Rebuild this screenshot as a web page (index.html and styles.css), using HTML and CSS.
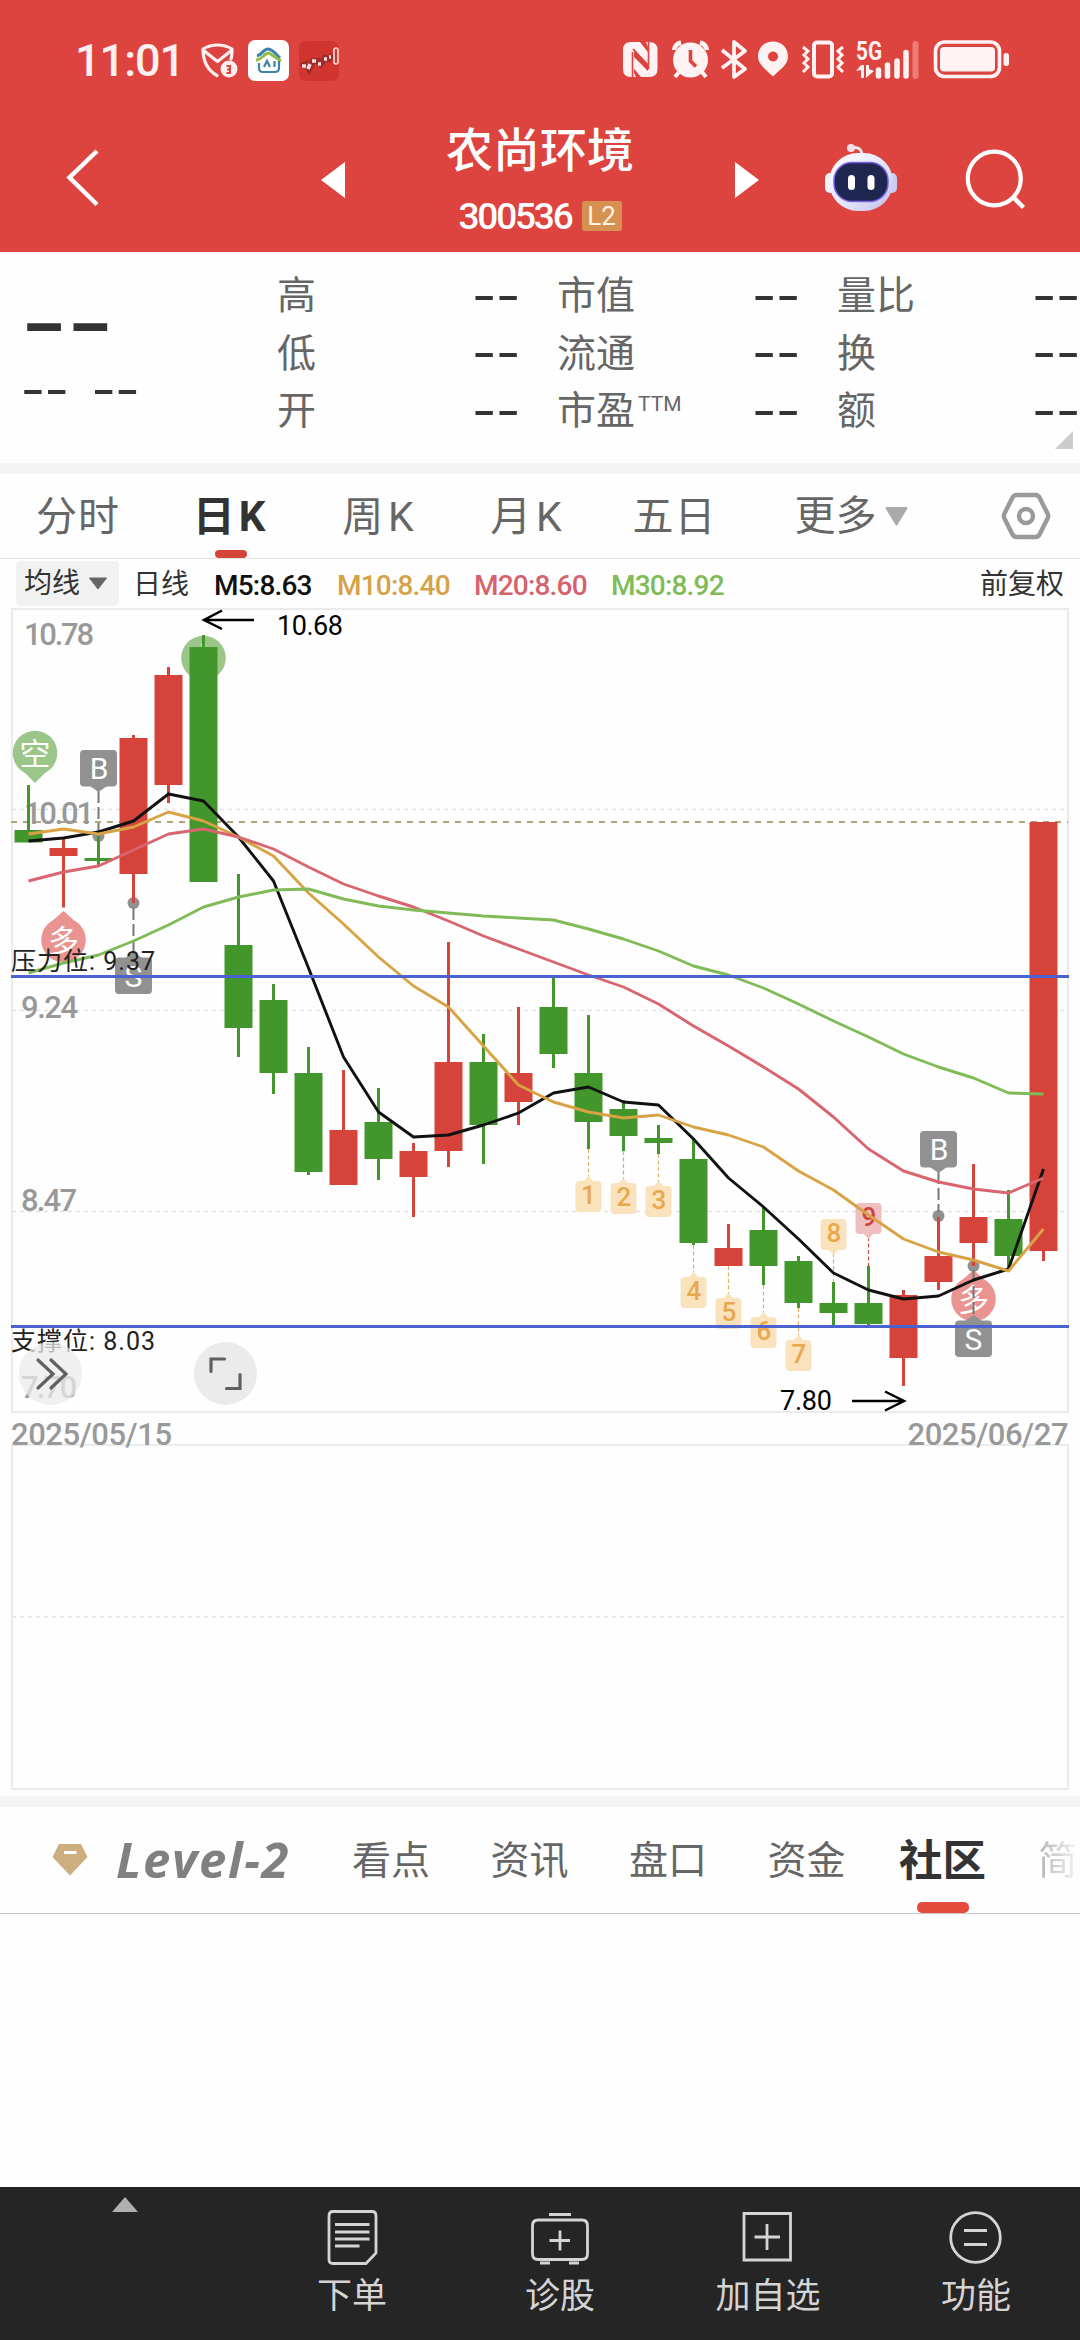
FILE: index.html
```html
<!DOCTYPE html>
<html lang="zh-CN">
<head>
<meta charset="utf-8">
<title>农尚环境 300536</title>
<link rel="stylesheet" href="styles.css">
</head>
<body>
<header class="header">
  <div class="status">
    <span class="time">11:01</span>
    <svg class="status-left" width="140" height="44" viewBox="200 39 140 44">
      <path d="M217.500 45C212 45 207 46.500 203 49C203 60 207 70 217 75.500M217.500 45C223 45 228 46.500 232 49C232 53 232 56 231 59M203 50L217.500 61.500L232 50" fill="none" stroke="#fff0f0" stroke-width="3.200" stroke-linejoin="round" stroke-linecap="round"/>
      <circle cx="229" cy="69" r="8.500" fill="#fff0f0"/>
      <path d="M226.500 66h3.500v7h-3.500M227 69.500h3" fill="none" stroke="#dd443f" stroke-width="2"/>
      <rect x="248" y="40" width="41" height="41" rx="7" fill="#fff"/>
      <path d="M257 56C262 55 263 49 268 49C272 49 276 54 280 58" fill="none" stroke="#3f82b0" stroke-width="3"/>
      <path d="M256 60C262 60 264 53 269 53L281 61" fill="none" stroke="#93bb4b" stroke-width="3"/>
      <path d="M259 63v5q0 4 4 4h12q4 0 4-4v-7M264 67l3-6l3 6M274.500 61v6" fill="none" stroke="#3f82b0" stroke-width="2.200"/>
      <rect x="299" y="41" width="40" height="40" rx="7" fill="#d0352f"/>
      <path d="M301 66l5-2 3 5 4-8 5 0 3 3 4-6 4 1 4-4" fill="none" stroke="#9d2b29" stroke-width="6"/>
      <path d="M302 66h4M308 69l2-5M312 61h4M318 64h3M324 59h3M329 57h2" fill="none" stroke="#f7dede" stroke-width="3.600"/>
      <rect x="334" y="48" width="4" height="16" rx="2" fill="none" stroke="#f7dede" stroke-width="1.600"/>
    </svg>
    <svg class="status-right" width="400" height="54" viewBox="620 29 400 54">
      <g fill="#fff2f2">
        <path d="M631 42H640L651 56V67L634 49V73L636 77H631Q623 77 623 69V50Q623 42 631 42Z"/>
        <path d="M646 42H649Q657.500 42 657.500 50V69Q657.500 77 649 77H641L630 64V53L648 71V47Z"/>
        <path d="M632.500 52V77M648.500 42V69" fill="none" stroke="#dd443f" stroke-width="1.600"/>
        <path d="M633 49L648 66M635 55L648 70" fill="none" stroke="#dd443f" stroke-width="1.600"/>
        <circle cx="690.500" cy="60" r="17.500"/>
        <path d="M674 50Q675 44 681 42.500M707 50Q706 44 700 42.500" fill="none" stroke="#fff2f2" stroke-width="4.500"/>
        <path d="M679 72l-4 5M702 72l4 5" stroke="#fff2f2" stroke-width="4"/>
        <path d="M690.500 50V61L696 66.500" fill="none" stroke="#dd443f" stroke-width="3.600"/>
        <path d="M722 50L745 69L734 77V42L745 51L722 68" fill="none" stroke="#fff2f2" stroke-width="3.800" stroke-linejoin="round"/>
        <path fill-rule="evenodd" d="M773 41.500C764 41.500 758 48 758 56.500C758 64 764 68 773 76.500C782 68 788 64 788 56.500C788 48 782 41.500 773 41.500ZM773 51.500a5 5 0 1 0 .1 0Z"/>
        <rect x="814" y="42.500" width="18" height="34" rx="3" fill="none" stroke="#fff2f2" stroke-width="4"/>
        <path d="M803 47l5 4-4 4 4 4-4 4 4 4-5 5M843 47l-5 4 4 4-4 4 4 4-4 4 5 5" fill="none" stroke="#fff2f2" stroke-width="3"/>
        <text x="856" y="59.500" class="five-g" textLength="26" lengthAdjust="spacingAndGlyphs">5G</text>
        <path d="M856 71l5-6h3v13h-3v-8ZM866 65h3v4l5 2-8 7Z"/>
        <path d="M878.500 70V76M887.500 65V76M897 61V76M906 52.500V76" stroke="#fff2f2" stroke-width="5.500" stroke-linecap="round"/>
        <path d="M915.500 44V76" stroke="#ef7b78" stroke-width="6" stroke-linecap="round"/>
        <rect x="935.500" y="42" width="64" height="34.500" rx="9" fill="none" stroke="#fff2f2" stroke-width="3.600"/>
        <rect x="940" y="47" width="55" height="24.500" rx="4"/>
        <rect x="1003.500" y="53" width="5.500" height="13" rx="2.700"/>
      </g>
    </svg>
  </div>
  <div class="titlebar">
    <svg class="back" width="36" height="60" viewBox="65 148 36 60"><path d="M97 151L69.500 177.500L97 204.500" fill="none" stroke="#fff" stroke-width="4.500"/></svg>
    <svg width="24" height="36" viewBox="0 0 24 36"><path d="M24 0V36L0 18Z" fill="#fff"/></svg>
    <div class="title">
      <h1>农尚环境</h1>
      <div class="code-row"><span class="code">300536</span><span class="badge">L2</span></div>
    </div>
    <svg class="next" width="24" height="36" viewBox="0 0 24 36"><path d="M0 0V36L24 18Z" fill="#fff"/></svg>
    <svg class="robot" width="72" height="68" viewBox="825 149 72 68">
      <defs><linearGradient id="shell" x1="0" y1="0" x2="1" y2="1"><stop offset="0" stop-color="#fff"/><stop offset=".6" stop-color="#dfe4fb"/><stop offset="1" stop-color="#c4b6e8"/></linearGradient></defs>
      <path d="M851 153C858 151 862 154 862 161" fill="none" stroke="#f0e3ee" stroke-width="3"/>
      <circle cx="851" cy="153" r="4" fill="#f0dfe8"/>
      <rect x="825" y="178" width="12" height="20" rx="5" fill="#edf0fd"/><rect x="885" y="178" width="12" height="20" rx="5" fill="#c7cdf3"/>
      <rect x="829" y="158" width="64" height="58" rx="29" fill="url(#shell)"/>
      <rect x="834" y="167.500" width="54" height="39" rx="18" fill="#1f2750" stroke="#7a5fe0" stroke-width="1.500"/>
      <rect x="848" y="180" width="7" height="15" rx="3.500" fill="#fff"/><rect x="867.500" y="180" width="7" height="15" rx="3.500" fill="#fff"/>
    </svg>
    <svg class="search" width="62" height="62" viewBox="965 148 62 62"><ellipse cx="994.300" cy="178.500" rx="26.500" ry="26.800" fill="none" stroke="#fff" stroke-width="4.200"/><path d="M1013 197L1023.500 207.500" stroke="#fff" stroke-width="4.500"/></svg>
  </div>
</header>

<section class="quote">
  <div class="price">
    <div class="big"><span class="dash">--</span></div>
    <div class="change"><span class="dash">--</span><span class="dash">--</span></div>
  </div>
  <dl class="stats">
    <div class="stat"><dt>高</dt><dd class="dash">--</dd></div>
    <div class="stat"><dt>市值</dt><dd class="dash">--</dd></div>
    <div class="stat"><dt>量比</dt><dd class="dash">--</dd></div>
    <div class="stat"><dt>低</dt><dd class="dash">--</dd></div>
    <div class="stat"><dt>流通</dt><dd class="dash">--</dd></div>
    <div class="stat"><dt>换</dt><dd class="dash">--</dd></div>
    <div class="stat"><dt>开</dt><dd class="dash">--</dd></div>
    <div class="stat"><dt>市盈<span class="ttm">TTM</span></dt><dd class="dash">--</dd></div>
    <div class="stat"><dt>额</dt><dd class="dash">--</dd></div>
  </dl>
  <svg class="corner" width="18" height="18" viewBox="0 0 18 18"><path d="M18 0V18H0Z" fill="#ccc"/></svg>
</section>

<nav class="periods">
  <span class="period">分时</span>
  <span class="period active">日K</span>
  <span class="period k">周K</span>
  <span class="period k">月K</span>
  <span class="period">五日</span>
  <span class="period more">更多<svg width="23" height="19" viewBox="0 0 23 19"><path d="M1.500 1H21.500L11.500 17.500Z" fill="#aaa" stroke="#aaa" stroke-width="2" stroke-linejoin="round"/></svg></span>
  <svg class="settings" width="50" height="48" viewBox="0 0 50 48"><path d="M15.500 3H34.500Q37 3 38.500 5.500L46.500 21.500Q47.800 24 46.500 26.500L38.500 42.500Q37 45 34.500 45H15.500Q13 45 11.500 42.500L3.500 26.500Q2.200 24 3.500 21.500L11.500 5.500Q13 3 15.500 3Z" fill="none" stroke="#999" stroke-width="4.400"/><circle cx="25" cy="24" r="7" fill="none" stroke="#999" stroke-width="4.400"/></svg>
</nav>

<div class="indicators">
  <span class="chip">均线<svg width="20" height="13" viewBox="0 0 20 13"><path d="M1.500 1H18.500L10 12Z" fill="#666" stroke="#666" stroke-linejoin="round"/></svg></span>
  <span class="daily">日线</span>
  <span class="ma m5">M5:8.63</span>
  <span class="ma m10">M10:8.40</span>
  <span class="ma m20">M20:8.60</span>
  <span class="ma m30">M30:8.92</span>
  <span class="adjust">前复权</span>
</div>

<svg class="chart" width="1080" height="1188" viewBox="0 608 1080 1188">
  <!-- frames and grid -->
  <g fill="none" stroke="#ebebeb" stroke-width="2">
    <path d="M12 609H1068V1412H12ZM12 1445H1068V1789H12Z"/>
    <path d="M12 809.500H1068M12 1010.500H1068M12 1211.500H1068M12 1617H1068" stroke="#e2e2e2" stroke-width="1.300" stroke-dasharray="4 4"/>
    <path d="M11 822H1068" stroke="#b3a27c" stroke-dasharray="6 6"/>
  </g>
  <g class="axis">
    <text x="24" y="645" textLength="70">10.78</text>
    <text x="24" y="824" textLength="70">10.01</text>
    <text x="21" y="1018" textLength="57">9.24</text>
    <text x="21" y="1211" textLength="56">8.47</text>
    <text x="21" y="1398" textLength="56">7.70</text>
    <text x="11" y="1445" textLength="161">2025/05/15</text>
    <text x="907.500" y="1445" textLength="161">2025/06/27</text>
  </g>

  <!-- long / short signals -->
  <g class="signal">
    <path d="M23 771L35 783L47 771Z" fill="#9ac689"/><circle cx="35" cy="753" r="22.300" fill="#9ac689"/>
    <text x="35" y="765">空</text>
    <circle cx="203.500" cy="658" r="22.300" fill="#9ac689"/>
    <text x="203.500" y="670">空</text>
    <path d="M51 922L63.500 911L76 922Z" fill="#e99490"/><circle cx="63.500" cy="940" r="22.300" fill="#e99490"/>
    <text x="63.500" y="952">多</text>
    <path d="M961 1281L973.500 1270L986 1281Z" fill="#e99490"/><circle cx="973.500" cy="1299" r="22.300" fill="#e99490"/>
    <text x="973.500" y="1311">多</text>
  </g>

  <!-- buy / sell flags -->
  <g fill="#919191">
    <circle cx="98.500" cy="836" r="6"/><circle cx="133.500" cy="903" r="6"/><circle cx="938.500" cy="1216" r="6"/><circle cx="973.500" cy="1266" r="6"/>
    <path d="M98.500 791V834M133.500 908V958M938.500 1172V1212M973.500 1270V1318" stroke="#777" stroke-width="2" stroke-dasharray="12 4"/>
    <path d="M90 786H107L98.500 792ZM125 958H142L133.500 952ZM930 1167H947L938.500 1173ZM965 1321H982L973.500 1315Z"/>
    <rect x="80" y="750" width="37" height="36.500" rx="4"/><rect x="115" y="957.500" width="37" height="36.500" rx="4"/>
    <rect x="920" y="1131" width="37" height="36.500" rx="4"/><rect x="955" y="1320.500" width="37" height="36.500" rx="4"/>
  </g>
  <g class="flag">
    <text x="99" y="779">B</text><text x="133.500" y="987">S</text><text x="939" y="1160">B</text><text x="973.500" y="1350">S</text>
  </g>

  <!-- candles: wicks, then bodies -->
  <g fill="none" stroke="#43962b">
    <path stroke-width="3" d="M28.500 785V842M98.500 836V865M203.500 635V882M238.500 874V1057M273.500 984V1094M308.500 1047V1175M378.500 1088V1180M483.500 1034V1164M553.500 978V1068M588.500 1015V1149M623.500 1100V1151M658.500 1125V1154M693.500 1140V1245M763.500 1207V1285M798.500 1256V1308M833.500 1282V1326M868.500 1266V1326M1008.500 1190V1270"/>
    <path stroke-width="28" d="M28.500 830V842.500M98.500 858V861M203.500 647V882M238.500 945V1028M273.500 1000V1073M308.500 1073V1172M378.500 1122V1159M483.500 1062V1125M553.500 1007V1054M588.500 1073V1122M623.500 1109V1136M658.500 1138V1143M693.500 1159V1243M763.500 1230V1266M798.500 1261V1303M833.500 1303V1313M868.500 1303V1324M1008.500 1219V1256"/>
  </g>
  <g fill="none" stroke="#d6433a">
    <path stroke-width="3" d="M63.500 839V907.500M133.500 735V903M168.500 667V803M343.500 1070V1185M413.500 1143V1217M448.500 942V1167M518.500 1007V1125M728.500 1224V1266M903.500 1290V1386M938.500 1217V1290M973.500 1164V1266M1043.500 822V1261"/>
    <path stroke-width="28" d="M63.500 848V856M133.500 738V874M168.500 675V785M343.500 1130V1185M413.500 1151V1177M448.500 1062V1151M518.500 1073V1102M728.500 1248V1266M903.500 1295V1358M938.500 1256V1282M973.500 1217V1243M1043.500 822V1251"/>
  </g>

  <!-- sequence tags -->
  <g fill="none" stroke="#dcb06a" stroke-width="1.200" stroke-dasharray="4 2.500">
    <path d="M588.500 1149V1178M623.500 1151V1180M658.500 1154V1183M693.500 1245V1274M728.500 1266V1295M763.500 1285V1314M798.500 1308V1337M833.500 1253V1282"/>
    <path d="M868.500 1237V1266" stroke="#c25050"/>
  </g>
  <g fill="#fae2bd">
    <path id="up" d="M579.500 1181H584L588.500 1176L593 1181H597.500Q601.500 1181 601.500 1185V1208Q601.500 1212 597.500 1212H579.500Q575.500 1212 575.500 1208V1185Q575.500 1181 579.500 1181Z"/>
    <use href="#up" x="35" y="2"/><use href="#up" x="70" y="5"/><use href="#up" x="105" y="96"/><use href="#up" x="140" y="117"/><use href="#up" x="175" y="136"/><use href="#up" x="210" y="159"/>
    <path d="M824.500 1219H842.500Q846.500 1219 846.500 1223V1246Q846.500 1250 842.500 1250H838L833.500 1255L829 1250H824.500Q820.500 1250 820.500 1246V1223Q820.500 1219 824.500 1219Z"/>
    <path fill="#efbfbf" d="M859.500 1203H877.500Q881.500 1203 881.500 1207V1230Q881.500 1234 877.500 1234H873L868.500 1239L864 1234H859.500Q855.500 1234 855.500 1230V1207Q855.500 1203 859.500 1203Z"/>
  </g>
  <g class="tag">
    <text x="588.500" y="1204">1</text><text x="624" y="1206">2</text><text x="659" y="1209">3</text><text x="694" y="1300">4</text><text x="729" y="1321">5</text><text x="764" y="1340">6</text><text x="799" y="1363">7</text><text x="834" y="1242">8</text><text x="869" y="1226" fill="#d0413c">9</text>
  </g>

  <!-- moving averages -->
  <g fill="none" stroke-width="2.900" stroke-linejoin="round">
    <path stroke="#111" d="M28.500 841L63.500 838L98.500 832L133.500 821L168.500 794L203.500 801L238.500 837L273.500 881L308.500 968L343.500 1057L378.500 1112L413.500 1137L448.500 1135L483.500 1125L518.500 1113L553.500 1093L588.500 1087L623.500 1102L658.500 1105L693.500 1139L728.500 1178L763.500 1207L798.500 1239L833.500 1273L868.500 1290L903.500 1299L938.500 1296L973.500 1280L1008.500 1269L1043.500 1169"/>
    <path stroke="#d8a345" d="M28.500 834L63.500 829L98.500 834L133.500 827L168.500 812L203.500 821L238.500 837L273.500 856L308.500 893L343.500 924L378.500 957L413.500 986L448.500 1007L483.500 1046L518.500 1085L553.500 1102L588.500 1112L623.500 1118L658.500 1115L693.500 1127L728.500 1135L763.500 1147L798.500 1171L833.500 1190L868.500 1215L903.500 1239L938.500 1252L973.500 1260L1008.500 1271L1043.500 1229"/>
    <path stroke="#d8656f" d="M28.500 881L63.500 872L98.500 866L133.500 850L168.500 834L203.500 829L238.500 837L273.500 849L308.500 867L343.500 884L378.500 896L413.500 907L448.500 921L483.500 936L518.500 949L553.500 962L588.500 975L623.500 987L658.500 1004L693.500 1026L728.500 1046L763.500 1067L798.500 1089L833.500 1117L868.500 1149L903.500 1171L938.500 1182L973.500 1189L1008.500 1193L1043.500 1178"/>
    <path stroke="#80bb58" d="M28.500 973L63.500 963L98.500 955L133.500 941L168.500 925L203.500 907L238.500 897L273.500 890L308.500 889L343.500 899L378.500 906L413.500 910L448.500 913L483.500 916L518.500 918L553.500 920L588.500 929L623.500 939L658.500 951L693.500 966L728.500 975L763.500 988L798.500 1004L833.500 1021L868.500 1037L903.500 1054L938.500 1067L973.500 1078L1008.500 1093L1043.500 1094"/>
  </g>

  <!-- resistance and support -->
  <path d="M11 976.500H1069M11 1326.500H1069" stroke="#4a63d0" stroke-width="3"/>
  <g class="level">
    <text x="11" y="970" textLength="144">压力位: 9.37</text>
    <text x="11" y="1350" textLength="144">支撑位: 8.03</text>
  </g>
  <g class="extreme">
    <text x="277" y="635" textLength="66">10.68</text>
    <text x="780" y="1410" textLength="52">7.80</text>
  </g>
  <path d="M254 620H205M222 610.500L204 620L222 629M852 1401H903M885 1391.500L904 1401L885 1410.500" fill="none" stroke="#000" stroke-width="2.500"/>

  <!-- chart buttons -->
  <g fill="#ebebeb">
    <circle cx="50.500" cy="1373.500" r="31.500" fill-opacity=".75"/><circle cx="225.500" cy="1373.500" r="31.500"/>
  </g>
  <path d="M38 1360L53 1374L38 1388M51 1360L66 1374L51 1388M211 1371.500V1359H224.500M226.500 1388.500H240V1374.500" fill="none" stroke="#606060" stroke-width="3.200" stroke-linecap="round"/>
</svg>

<nav class="sections">
  <svg class="gem" width="36" height="32" viewBox="0 0 36 32"><path d="M7 0H29L35.500 13L18 31.500L.5 13Z" fill="#ccae7f"/><path d="M12 8.500H24.500" stroke="#fff" stroke-width="3"/></svg>
  <span class="level2">Level-2</span>
  <span>看点</span><span>资讯</span><span>盘口</span><span>资金</span>
  <span class="current">社区</span>
  <span class="fade">简</span>
</nav>

<main class="content"></main>

<footer class="toolbar">
  <svg class="expand" width="26" height="15" viewBox="0 0 26 15"><path d="M13 0L26 15H0Z" fill="#b0b0b0"/></svg>
  <div class="tool">
    <svg width="60" height="56" viewBox="322 2210 60 56"><path d="M333 2211.500H372Q376 2211.500 376 2216V2253L366 2263.500H333Q329 2263.500 329 2259.500V2216Q329 2211.500 333 2211.500ZM335 2224.500H369.500M335 2232H369.500M335 2239H369.500M335 2246H359.500"/></svg>
    <span>下单</span>
  </div>
  <div class="tool">
    <svg width="60" height="56" viewBox="530 2210 60 56"><path d="M538 2220H582Q587.500 2220 587.500 2226V2254Q587.500 2259.500 582 2259.500H538Q532.500 2259.500 532.500 2254V2226Q532.500 2220 538 2220ZM549 2214.500H571M540 2263H550M569 2263H579M560 2230.500V2250.500M549.500 2240.500H570"/></svg>
    <span>诊股</span>
  </div>
  <div class="tool">
    <svg width="60" height="56" viewBox="738 2210 60 56"><path d="M744 2213.500H790.500V2260H744ZM767 2224V2250M754.500 2237H780"/></svg>
    <span>加自选</span>
  </div>
  <div class="tool">
    <svg width="60" height="56" viewBox="946 2210 60 56"><circle cx="975.500" cy="2237.500" r="24.800"/><path d="M964 2230.500H987M964 2244.500H987"/></svg>
    <span>功能</span>
  </div>
</footer>
</body>
</html>
```
FILE: styles.css
```css
* { box-sizing: border-box; }

body {
  margin: 0;
  width: 1080px;
  height: 2340px;
  overflow: hidden;
  display: flex;
  flex-direction: column;
  background: #fefefe;
  font-family: Roboto, "Noto Sans CJK SC", sans-serif;
  color: #333;
}

svg { display: block; flex: none; }

/* Header */
.header { flex: none; height: 252px; background: #dd443f; color: #fff; }
.status { display: flex; height: 122px; padding: 39px 0 0 75px; }
.time {
  width: 125px;
  font-size: 45px;
  font-weight: 500;
  line-height: 44px;
  letter-spacing: -1px;
  color: #fff0f0;
}
.status-right { margin: -10px 0 0 280px; }
.five-g { font: 700 25px Roboto, sans-serif; }

.titlebar {
  display: grid;
  grid-template-columns: 321px 69px 300px 135px 140px 1fr;
  height: 130px;
  padding-top: 2px;
}
.titlebar > svg { margin-top: 38px; }
.titlebar > .back { margin: 24px 0 0 65px; }
.titlebar > .next { margin-left: 45px; }
.titlebar > .robot { margin-top: 20px; }
.titlebar > .search { margin-top: 24px; }
.title { display: flex; flex-direction: column; align-items: center; padding-top: 2px; }
.title h1 {
  margin: 0;
  font-size: 47px;
  font-weight: 500;
  line-height: 50px;
  white-space: nowrap;
}
.code-row { display: flex; align-items: center; gap: 10px; height: 30px; margin-top: 25px; }
.code {
  width: 113px;
  font-size: 37px;
  font-weight: 500;
  line-height: 30px;
  padding-top: 2px;
  letter-spacing: -2.200px;
}
.badge {
  width: 40px;
  height: 30px;
  border-radius: 3px;
  background: #d69150;
  font-size: 26px;
  line-height: 31px;
  text-align: center;
  color: #fff3e4;
}

/* Quote summary */
.quote {
  position: relative;
  flex: none;
  display: flex;
  height: 222px;
  border-bottom: 11px solid #f4f4f4;
}
.dash {
  display: block;
  font-family: "DejaVu Sans", sans-serif;
  font-size: 66px;
  line-height: 40px;
  height: 40px;
  color: #333;
  transform: scaleY(.75);
}
.price { flex: none; width: 277px; padding-left: 21px; }
.big { padding-top: 49px; }
.big .dash { font-size: 128px; line-height: 40px; }
.change { display: flex; gap: 23px; margin-top: 28px; }
.stats {
  display: grid;
  grid-template-columns: 280px 280px 243px;
  grid-auto-rows: 57.500px;
  margin: 0;
  padding-top: 14px;
}
.stat { display: flex; justify-content: space-between; align-items: center; width: 243px; }
.stat dt { height: 57px; padding-top: 2px; font-size: 39px; line-height: 57px; color: #666; white-space: nowrap; }
.stat dd { margin: 0; }
.ttm { font-size: 21px; line-height: 1; vertical-align: 13px; margin-left: 3px; }
.corner { position: absolute; right: 7px; bottom: 14px; }

/* Period tabs */
.periods {
  flex: none;
  display: grid;
  grid-template-columns: 156px 150px 149px 147px 145px 208px 1fr;
  align-items: center;
  height: 85px;
  border-bottom: 1px solid #e4e4e4;
}
.period {
  justify-self: center;
  height: 84px;
  font-size: 41px;
  line-height: 86px;
  color: #666;
  letter-spacing: 1px;
}
.period.active {
  display: flex;
  flex-direction: column;
  align-items: center;
  color: #333;
  font-size: 42px;
  font-weight: 700;
  letter-spacing: 4px;
}
.period.active::after {
  content: "";
  flex: none;
  width: 32px;
  height: 8px;
  margin-top: -10px;
  border-radius: 4px;
  background: #d4443b;
}
.period.k { letter-spacing: 5px; }
.period.more { display: flex; align-items: center; gap: 8px; letter-spacing: 0; }
.settings { justify-self: center; margin-left: 16px; }

/* Indicator legend */
.indicators {
  flex: none;
  display: flex;
  align-items: flex-start;
  height: 49px;
  padding: 2px 16px 0;
  font-size: 28px;
  line-height: 48px;
}
.chip {
  display: flex;
  align-items: center;
  gap: 8px;
  width: 103px;
  height: 45px;
  padding-left: 8px;
  border-radius: 5px;
  background: #f1f1f1;
}
.daily { width: 95px; padding-left: 14px; }
.ma { font-weight: 500; letter-spacing: -.8px; line-height: 49px; }
.m5 { width: 123px; color: #111; }
.m10 { width: 137px; color: #d6a247; }
.m20 { width: 137px; color: #d4636e; }
.m30 { width: 137px; color: #80bb58; }
.adjust { margin-left: auto; }

/* Chart text */
.chart { flex: none; }
.axis { font-size: 31px; font-weight: 500; fill: #999; }
.signal { font-size: 31px; fill: #fff; text-anchor: middle; }
.flag { font-size: 30px; fill: #fff; text-anchor: middle; }
.tag { font-size: 26px; font-weight: 500; fill: #e8a84e; text-anchor: middle; }
.level { font-size: 25px; fill: #222; }
.extreme { font-size: 27px; fill: #000; }

/* Section tabs */
.sections {
  flex: none;
  display: flex;
  align-items: center;
  height: 118px;
  padding-left: 52px;
  border-top: 11px solid #f4f4f4;
  border-bottom: 1px solid #c8c8c8;
  font-size: 39px;
  color: #666;
  white-space: nowrap;
}
.sections > span { flex: none; width: 138.500px; height: 106px; line-height: 109px; }
.sections > .level2 {
  width: 264px;
  padding-left: 28px;
  font: italic 700 49px/105px "Open Sans", sans-serif;
  letter-spacing: 1.700px;
  color: #808080;
}
.sections > .current {
  display: flex;
  flex-direction: column;
  width: 87px;
  margin-left: -7px;
  font-size: 43.500px;
  font-weight: 700;
  color: #333;
}
.current::after {
  content: "";
  flex: none;
  width: 52px;
  height: 11px;
  margin: -14px 0 0 18px;
  border-radius: 5px;
  background: #e44d3e;
}
.sections > .fade {
  width: 40px;
  margin-left: 52px;
  color: transparent;
  background: linear-gradient(90deg, #b5b5b5, #f4f4f4);
  background-clip: text;
  -webkit-background-clip: text;
}

.content { flex: 1; }

/* Bottom toolbar */
.toolbar { flex: none; display: flex; height: 153px; background: #252525; }
.expand { margin: 10px 110px 0 112px; }
.tool {
  display: flex;
  flex-direction: column;
  align-items: center;
  width: 208px;
  padding-top: 23px;
  color: #d4d4d4;
  font-size: 35px;
}
.tool svg { fill: none; stroke: #d4d4d4; stroke-width: 2.800; }
.tool span { line-height: 50px; margin-top: 6px; }
```
